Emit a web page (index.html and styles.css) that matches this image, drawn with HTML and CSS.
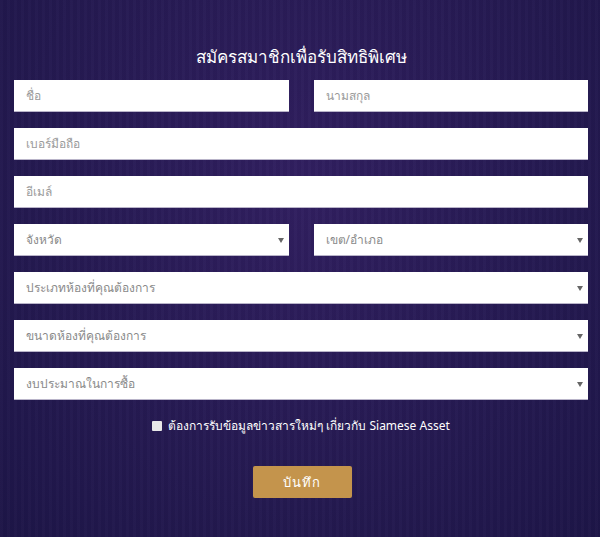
FILE: index.html
```html
<!DOCTYPE html>
<html lang="th">
<head>
  <meta charset="UTF-8" />
  <meta name="viewport" content="width=device-width, initial-scale=1.0" />
  <title>สมัครสมาชิก - Siamese Asset</title>
  <link rel="stylesheet" href="styles.css">
</head>
<body>
  <section class="register">
    <h2 class="register-title">สมัครสมาชิกเพื่อรับสิทธิพิเศษ</h2>
    <form class="register-form">
      <div class="row two">
        <input type="text" placeholder="ชื่อ" />
        <input type="text" placeholder="นามสกุล" />
      </div>
      <div class="row">
        <input type="tel" placeholder="เบอร์มือถือ" />
      </div>
      <div class="row">
        <input type="email" placeholder="อีเมล์" />
      </div>
      <div class="row two">
        <div class="select-box">
          <select>
            <option>จังหวัด</option>
          </select>
        </div>
        <div class="select-box">
          <select>
            <option>เขต/อำเภอ</option>
          </select>
        </div>
      </div>
      <div class="row">
        <div class="select-box">
          <select>
            <option>ประเภทห้องที่คุณต้องการ</option>
          </select>
        </div>
      </div>
      <div class="row">
        <div class="select-box">
          <select>
            <option>ขนาดห้องที่คุณต้องการ</option>
          </select>
        </div>
      </div>
      <div class="row">
        <div class="select-box">
          <select>
            <option>งบประมาณในการซื้อ</option>
          </select>
        </div>
      </div>
      <label class="subscribe">
        <input type="checkbox" />
        <span>ต้องการรับข้อมูลข่าวสารใหม่ๆ เกี่ยวกับ Siamese Asset</span>
      </label>
      <button type="submit" class="btn-save">บันทึก</button>
    </form>
  </section>
</body>
</html>
```

FILE: styles.css
```css
/* General */
body {
  margin: 0;
  font-family: "Noto Sans", "Liberation Sans", sans-serif;
  background-color: #1e1648;
  color: #fff;
}

.register {
  min-height: 537px;
  box-sizing: border-box;
  padding: 47px 12px 0 14px;
  background:
    repeating-linear-gradient(90deg, rgba(255, 255, 255, 0.015) 0 3px, rgba(0, 0, 0, 0.02) 3px 7px),
    radial-gradient(ellipse at 50% 35%, #311f60 0%, #281b55 45%, #1d1547 100%);
}

.register-title {
  margin: 0 0 13px;
  text-align: center;
  font-size: 17px;
  font-weight: normal;
  line-height: 20px;
}

/* Form */
.register-form {
  display: flex;
  flex-direction: column;
  gap: 16px;
}

.row {
  display: flex;
  gap: 25px;
}

.row > * {
  flex: 1;
}

.register-form input[type="text"],
.register-form input[type="tel"],
.register-form input[type="email"],
.register-form select {
  width: 100%;
  height: 32px;
  box-sizing: border-box;
  padding: 0 12px;
  border: none;
  border-bottom: 1px solid #b9b4c9;
  border-radius: 0;
  background-color: #fff;
  font-family: inherit;
  font-size: 12px;
  color: #8a8a8a;
  outline: none;
}

.register-form input::placeholder {
  color: #9a9a9a;
}

.select-box {
  position: relative;
}

.register-form select {
  appearance: none;
  -webkit-appearance: none;
}

.select-box::after {
  content: "";
  position: absolute;
  right: 5px;
  top: 14px;
  border-left: 3px solid transparent;
  border-right: 3px solid transparent;
  border-top: 5px solid #666;
  pointer-events: none;
}

/* Checkbox */
.subscribe {
  display: flex;
  justify-content: center;
  align-items: center;
  gap: 6px;
  margin-top: 2px;
  font-size: 12px;
  line-height: 16px;
}

.subscribe input {
  width: 10px;
  height: 10px;
  margin: 0;
  appearance: none;
  -webkit-appearance: none;
  background-color: #e8e8e8;
  border-radius: 1px;
}

/* Button */
.btn-save {
  align-self: center;
  width: 99px;
  height: 32px;
  margin-top: 16px;
  margin-left: 2px;
  border: none;
  border-radius: 2px;
  background-color: #c4944c;
  color: #fff;
  font-family: inherit;
  font-size: 13px;
  letter-spacing: 1px;
  cursor: pointer;
}

.btn-save:hover {
  background-color: #b3843f;
}
```
